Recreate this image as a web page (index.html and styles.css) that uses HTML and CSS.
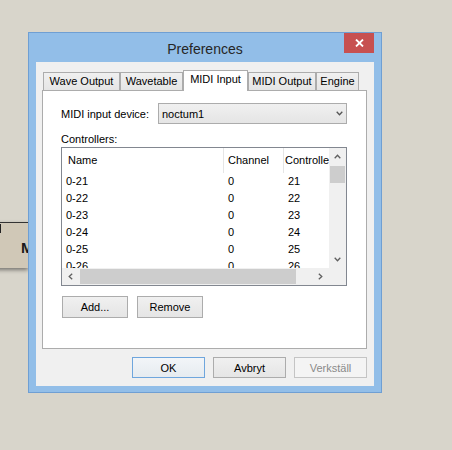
FILE: index.html
```html
<!DOCTYPE html>
<html>
<head>
<meta charset="utf-8">
<link rel="stylesheet" href="styles.css">
</head>
<body>
<div class="desktop">
  <div class="node"><span class="node-label">M</span></div>
  <div class="window">
    <div class="titlebar">
      <span class="title">Preferences</span>
      <div class="close"><svg width="9" height="8" viewBox="0 0 9 8"><path d="M1 0.5 L8 7.5 M8 0.5 L1 7.5" stroke="#fff" stroke-width="1.8" fill="none"/></svg></div>
    </div>
    <div class="client">
      <div class="tabs">
        <div class="tab tab-wave">Wave Output</div>
        <div class="tab tab-table">Wavetable</div>
        <div class="tab tab-in active">MIDI Input</div>
        <div class="tab tab-out">MIDI Output</div>
        <div class="tab tab-engine">Engine</div>
      </div>
      <div class="panel">
        <div class="device-row">
          <span>MIDI input device:</span>
          <div class="combo"><span>noctum1</span><svg width="7" height="5" viewBox="0 0 7 5"><path d="M0.7 0.8 L3.5 3.8 L6.3 0.8" stroke="#555" stroke-width="1.3" fill="none"/></svg></div>
        </div>
        <div class="controllers-label">Controllers:</div>
        <div class="list">
          <div class="list-main">
            <div class="list-head">
              <div class="cell head-name">Name</div>
              <div class="cell">Channel</div>
              <div class="cell head-ctrl">Controller</div>
            </div>
            <div class="list-row"><div class="cell">0-21</div><div class="cell">0</div><div class="cell">21</div></div>
            <div class="list-row"><div class="cell">0-22</div><div class="cell">0</div><div class="cell">22</div></div>
            <div class="list-row"><div class="cell">0-23</div><div class="cell">0</div><div class="cell">23</div></div>
            <div class="list-row"><div class="cell">0-24</div><div class="cell">0</div><div class="cell">24</div></div>
            <div class="list-row"><div class="cell">0-25</div><div class="cell">0</div><div class="cell">25</div></div>
            <div class="list-row"><div class="cell">0-26</div><div class="cell">0</div><div class="cell">26</div></div>
          </div>
          <div class="vscroll">
            <div class="arrow"><svg width="7" height="5" viewBox="0 0 7 5"><path d="M0.7 4.2 L3.5 1.2 L6.3 4.2" stroke="#606060" stroke-width="1.3" fill="none"/></svg></div>
            <div class="vthumb"></div>
            <div class="spacer"></div>
            <div class="arrow"><svg width="7" height="5" viewBox="0 0 7 5"><path d="M0.7 0.8 L3.5 3.8 L6.3 0.8" stroke="#606060" stroke-width="1.3" fill="none"/></svg></div>
          </div>
          <div class="hscroll">
            <div class="arrow"><svg width="5" height="7" viewBox="0 0 5 7"><path d="M4.2 0.7 L1.2 3.5 L4.2 6.3" stroke="#606060" stroke-width="1.3" fill="none"/></svg></div>
            <div class="hthumb"></div>
            <div class="spacer"></div>
            <div class="arrow"><svg width="5" height="7" viewBox="0 0 5 7"><path d="M0.8 0.7 L3.8 3.5 L0.8 6.3" stroke="#606060" stroke-width="1.3" fill="none"/></svg></div>
          </div>
          <div class="corner"></div>
        </div>
        <div class="list-buttons">
          <button class="btn">Add...</button>
          <button class="btn">Remove</button>
        </div>
      </div>
      <div class="dialog-buttons">
        <button class="btn btn-default">OK</button>
        <button class="btn">Avbryt</button>
        <button class="btn btn-disabled">Verkställ</button>
      </div>
    </div>
  </div>
</div>
</body>
</html>
```
FILE: styles.css
```css
* { box-sizing: border-box; }
html, body { margin: 0; padding: 0; }
body {
  width: 452px;
  height: 450px;
  overflow: hidden;
  background: #d8d5cb;
  font-family: "Liberation Sans", Arial, sans-serif;
  font-size: 11px;
  color: #000;
}
.desktop { position: relative; width: 452px; height: 450px; }

.node {
  position: absolute;
  left: -62px;
  top: 222px;
  width: 90px;
  height: 46px;
  border-top: 1px solid #333;
  background: #d0c8b7;
  box-shadow: 0 2px 4px rgba(0,0,0,0.45);
  padding: 16px 0 0 83px;
  font-size: 15px;
  font-weight: bold;
  line-height: 17px;
  color: #1a1a1a;
}
.node::before {
  content: "";
  position: absolute;
  left: 62px;
  top: 1px;
  width: 1px;
  height: 9px;
  background: #222;
}

.window {
  position: absolute;
  left: 28px;
  top: 32px;
  width: 354px;
  height: 361px;
  border: 1px solid #6f9fd3;
  background: #92bee8;
  padding: 0 7px 6px;
  display: flex;
  flex-direction: column;
}
.titlebar {
  position: relative;
  height: 29px;
  flex: none;
  display: flex;
  align-items: center;
  justify-content: center;
  padding-top: 2px;
}
.title { font-size: 14px; color: #262626; }
.close {
  position: absolute;
  top: 0;
  right: 0;
  width: 30px;
  height: 20px;
  background: #c75050;
  display: flex;
  align-items: center;
  justify-content: center;
}

.client {
  flex: 1;
  background: #f0f0f0;
  padding: 8px 7px 0 6px;
  display: flex;
  flex-direction: column;
}
.tabs {
  height: 20px;
  flex: none;
  display: flex;
  align-items: flex-end;
  padding-left: 1px;
  position: relative;
  z-index: 1;
}
.tab {
  height: 18px;
  border: 1px solid #acacac;
  border-bottom: 0;
  background: linear-gradient(#f0f0f0, #e5e5e5);
  text-align: center;
  line-height: 17px;
  white-space: nowrap;
}
.tab.active {
  height: 21px;
  margin-bottom: -1px;
  background: #fff;
}
.tab-wave { width: 77px; }
.tab-table { width: 63px; }
.tab-in { width: 65px; }
.tab-out { width: 68px; }
.tab-engine { width: 43px; }

.panel {
  width: 325px;
  height: 259px;
  flex: none;
  border: 1px solid #acacac;
  background: #fff;
  padding: 12px 19px 0 18px;
}
.device-row {
  display: grid;
  grid-template-columns: 97px 189px;
  align-items: center;
  height: 21px;
}
.combo {
  height: 21px;
  border: 1px solid #acacac;
  background: linear-gradient(#f0f0f0, #e5e5e5);
  display: flex;
  align-items: center;
  justify-content: space-between;
  padding: 0 3px 0 3px;
}
.controllers-label { margin-top: 9px; line-height: 13px; }

.list {
  margin-top: 1px;
  width: 286px;
  height: 139px;
  border: 1px solid #828790;
  display: grid;
  grid-template-columns: 1fr 17px;
  grid-template-rows: 1fr 17px;
  background: #fff;
}
.list-main { overflow: hidden; background: #fff; }
.list-head, .list-row {
  display: grid;
  grid-template-columns: 162px 60px 1fr;
  white-space: nowrap;
}
.list-head { height: 25px; line-height: 25px; }
.list-head .cell { border-right: 1px solid #e5e5e5; }
.list-row { height: 17px; line-height: 17px; }
.cell { padding-left: 4px; overflow: hidden; }
.list-head .head-name { padding-left: 6px; }
.list-head .head-ctrl { padding-left: 1px; border-right: 0; }

.vscroll {
  grid-row: 1;
  grid-column: 2;
  background: #f0f0f0;
  display: flex;
  flex-direction: column;
}
.arrow {
  width: 17px;
  height: 17px;
  flex: none;
  display: flex;
  align-items: center;
  justify-content: center;
}
.spacer { flex: 1; }
.vthumb {
  flex: none;
  height: 17px;
  margin: 1px 1px 0;
  background: #cdcdcd;
}
.hscroll {
  grid-row: 2;
  grid-column: 1;
  background: #f0f0f0;
  display: flex;
}
.hthumb {
  flex: none;
  width: 216px;
  margin: 1px 0 1px 1px;
  background: #cdcdcd;
}
.corner { grid-row: 2; grid-column: 2; background: #f0f0f0; }

.list-buttons {
  display: flex;
  gap: 9px;
  margin-top: 10px;
  padding-left: 1px;
}
.btn {
  width: 66px;
  height: 22px;
  border: 1px solid #acacac;
  background: linear-gradient(#f0f0f0, #e5e5e5);
  font: inherit;
  color: #000;
  padding: 0;
  margin: 0;
  display: flex;
  align-items: center;
  justify-content: center;
}
.dialog-buttons {
  display: flex;
  justify-content: flex-end;
  gap: 8px;
  margin-top: 8px;
}
.dialog-buttons .btn { width: 73px; height: 21px; }
.btn-default { border-color: #6fa6dd; background: linear-gradient(#f2f5f8, #e6ebf0); }
.btn-disabled { border-color: #c4c4c4; background: #f4f4f4; color: #8a8a8a; }
```
